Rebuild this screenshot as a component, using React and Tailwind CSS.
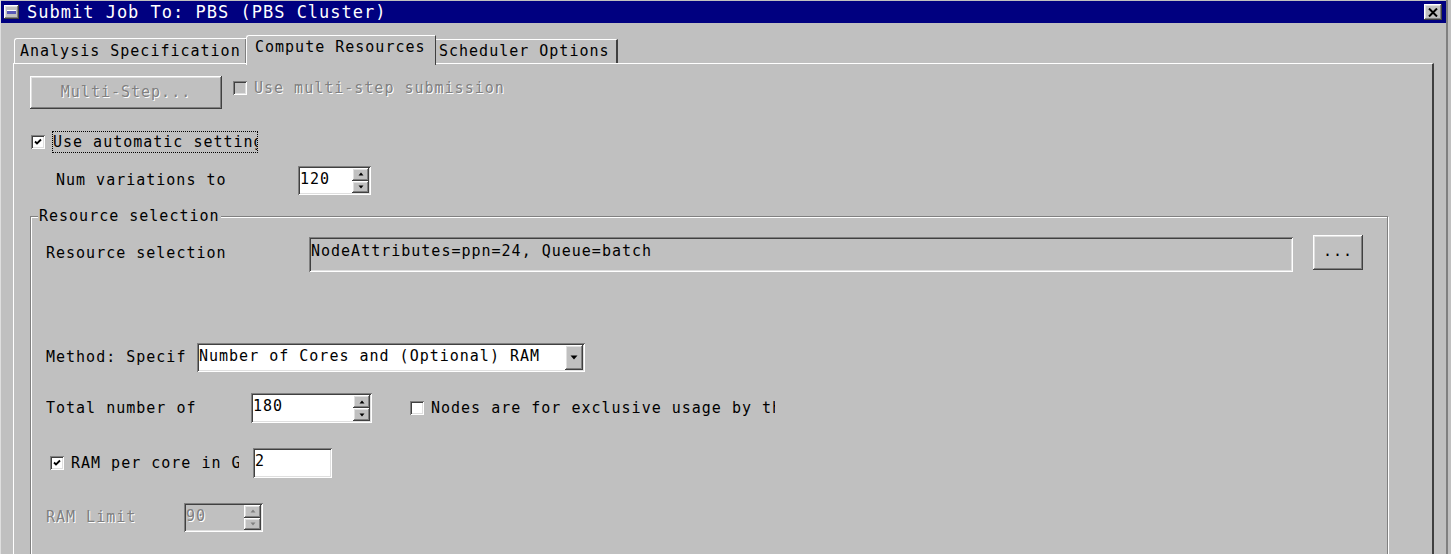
import React from 'react';

const raised =
  'shadow-[inset_-1px_-1px_#404040,inset_1px_1px_#ffffff,inset_-2px_-2px_#808080,inset_2px_2px_#dfdfdf]';
const sunken =
  'shadow-[inset_1px_1px_#808080,inset_-1px_-1px_#ffffff,inset_2px_2px_#404040,inset_-2px_-2px_#dfdfdf]';
const disabledText = 'text-[#808080] [text-shadow:1px_1px_0_#ffffff]';

function Check({ checked, disabled }) {
  return (
    <div
      className={`w-[14px] h-[14px] shrink-0 flex items-center justify-center ${sunken} ${
        disabled ? 'bg-[#c0c0c0]' : 'bg-white'
      }`}
    >
      {checked && (
        <svg width="8" height="8" viewBox="0 0 8 8">
          <path d="M1 3.5 L3 5.5 L7 1.5" fill="none" stroke="#000" strokeWidth="1.8" />
        </svg>
      )}
    </div>
  );
}

function Arrow({ up, color = '#000' }) {
  return (
    <svg width="6" height="4" viewBox="0 0 6 4">
      {up ? <path d="M3 0.5 L5.5 3.5 L0.5 3.5 Z" fill={color} /> : <path d="M0.5 0.5 L5.5 0.5 L3 3.5 Z" fill={color} />}
    </svg>
  );
}

function Spin({ value, width, height, disabled }) {
  const arrow = disabled ? '#808080' : '#000';
  return (
    <div
      className={`flex items-stretch p-[2px] ${sunken} ${disabled ? 'bg-[#c0c0c0]' : 'bg-white'}`}
      style={{ width, height }}
    >
      <div className={`flex-1 pt-[2px] leading-[18px] ${disabled ? disabledText : 'text-black'}`}>{value}</div>
      <div className="w-[17px] flex flex-col">
        <div className={`flex-1 bg-[#c0c0c0] flex items-center justify-center ${raised}`}>
          <Arrow up color={arrow} />
        </div>
        <div className={`flex-1 bg-[#c0c0c0] flex items-center justify-center ${raised}`}>
          <Arrow color={arrow} />
        </div>
      </div>
    </div>
  );
}

export default function App() {
  return (
    <div className="w-[1451px] h-[554px] overflow-hidden bg-[#c0c0c0] font-['DejaVu_Sans_Mono',monospace] text-[15px] tracking-[1px] text-black">
      <div className="w-[1448px] h-[554px] border-l border-[#dfdfdf] border-r-[2px] border-r-[#808080]">
        {/* title bar */}
        <div className="h-[23px] bg-[#000080] flex items-center pl-[3px] pr-[4px] border-t border-[#c0c0c0]">
          <div className={`w-[15px] h-[14px] bg-[#c0c0c0] ${raised} flex items-center justify-center`}>
            <div className="w-[9px] h-[4px] bg-[#5858b8] border-t border-white" />
          </div>
          <div className="ml-[8px] text-white text-[17px] leading-none">Submit Job To: PBS (PBS Cluster)</div>
          <div className="flex-1" />
          <div className={`w-[18px] h-[16px] bg-[#c0c0c0] ${raised} flex items-center justify-center`}>
            <svg width="10" height="9" viewBox="0 0 10 9">
              <path d="M1 0.5 L9 8.5 M9 0.5 L1 8.5" stroke="#000" strokeWidth="2" />
            </svg>
          </div>
        </div>

        {/* tabs */}
        <div className="mt-[12px] h-[28px] pl-[13px] flex items-end">
          <div className="w-[232px] h-[25px] rounded-tl-[3px] border-t border-l border-white shadow-[inset_-1px_0_#808080] pl-[5px] pt-[2px] leading-[20px]">
            Analysis Specification
          </div>
          <div className="relative z-10 w-[190px] h-[30px] -mb-[2px] bg-[#c0c0c0] rounded-tl-[3px] border-t border-l border-white border-r border-r-[#404040] pl-[8px] pt-[1px] leading-[20px]">
            Compute Resources
          </div>
          <div className="w-[182px] h-[24px] border-t border-white border-r-2 border-r-[#404040] pl-[3px] pt-[1px] leading-[20px]">
            Scheduler Options
          </div>
        </div>

        {/* panel */}
        <div className="ml-[12px] w-[1421px] h-[520px] border-t border-l border-white border-r-2 border-r-[#404040] pl-[16px] pt-[12px]">
          {/* multi step */}
          <div className="flex items-start h-[33px]">
            <div className={`w-[192px] h-[33px] ${raised} flex items-center justify-center ${disabledText}`}>
              Multi-Step...
            </div>
            <div className="ml-[11px] mt-[1px] flex items-center">
              <Check disabled />
              <span className={`ml-[7px] ${disabledText}`}>Use multi-step submission</span>
            </div>
          </div>

          {/* automatic */}
          <div className="mt-[22px] h-[22px] flex items-center">
            <div className="ml-[1px]">
              <Check checked />
            </div>
            <div className="ml-[7px] w-[206px] h-[22px] border border-dotted border-black overflow-hidden whitespace-nowrap leading-[20px]">
              Use automatic setting
            </div>
          </div>

          {/* num variations */}
          <div className="mt-[13px] h-[29px] flex items-center">
            <div className="ml-[26px] w-[242px]">Num variations to</div>
            <Spin value="120" width={73} height={29} />
          </div>

          {/* resource group */}
          <div className="relative mt-[21px] w-[1358px] h-[400px] border border-[#808080] shadow-[inset_1px_1px_#ffffff,1px_1px_#ffffff] pt-[18px] pl-[15px]">
            <div className="absolute -top-[10px] left-[7px] px-[1px] bg-[#c0c0c0] leading-[18px]">Resource selection</div>

            <div className="flex items-start h-[37px]">
              <div className="w-[263px] h-[37px] flex items-center">Resource selection</div>
              <div className={`mt-[2px] w-[984px] h-[35px] ${sunken} pl-[2px] pt-[5px] leading-[18px]`}>
                NodeAttributes=ppn=24, Queue=batch
              </div>
              <div className={`ml-[20px] w-[50px] h-[35px] ${raised} flex items-center justify-center pb-[2px]`}>
                ...
              </div>
            </div>

            <div className="mt-[71px] h-[29px] flex items-center">
              <div className="w-[141px] mr-[10px] overflow-hidden whitespace-nowrap">Method: Specify</div>
              <div className={`w-[388px] h-[29px] bg-white ${sunken} flex items-stretch p-[2px]`}>
                <div className="flex-1 pt-[2px] leading-[18px] whitespace-nowrap">
                  Number of Cores and (Optional) RAM
                </div>
                <div className={`w-[18px] bg-[#c0c0c0] ${raised} flex items-center justify-center`}>
                  <svg width="8" height="5" viewBox="0 0 8 5">
                    <path d="M0.5 0.5 L7.5 0.5 L4 4.5 Z" fill="#000" />
                  </svg>
                </div>
              </div>
            </div>

            <div className="mt-[21px] h-[30px] flex items-center">
              <div className="w-[205px] overflow-hidden whitespace-nowrap">Total number of</div>
              <Spin value="180" width={121} height={30} />
              <div className="ml-[38px]">
                <Check />
              </div>
              <div className="ml-[7px] w-[344px] overflow-hidden whitespace-nowrap">
                Nodes are for exclusive usage by this job
              </div>
            </div>

            <div className="mt-[25px] h-[30px] flex items-center">
              <div className="ml-[4px]">
                <Check checked />
              </div>
              <div className="ml-[7px] w-[168px] overflow-hidden whitespace-nowrap">RAM per core in GB</div>
              <div className={`ml-[14px] w-[79px] h-[30px] bg-white ${sunken} pl-[2px] pt-[3px] leading-[20px]`}>2</div>
            </div>

            <div className="mt-[25px] h-[29px] flex items-center">
              <div className={`w-[138px] ${disabledText}`}>RAM Limit</div>
              <Spin value="90" width={79} height={29} disabled />
            </div>
          </div>
        </div>
      </div>
    </div>
  );
}
